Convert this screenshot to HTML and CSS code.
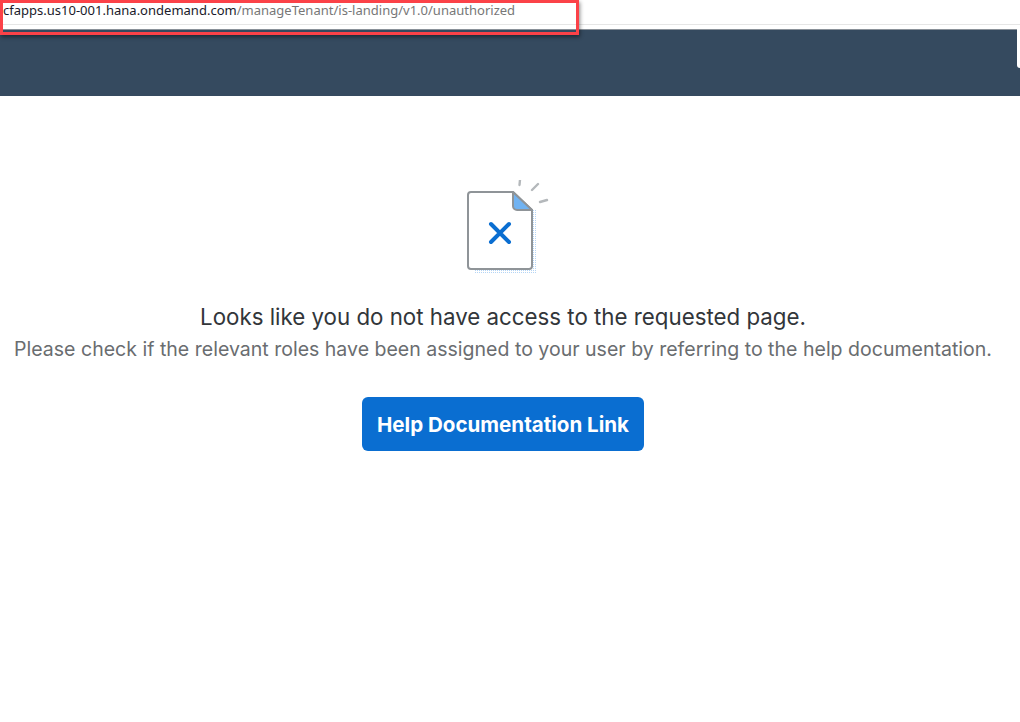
FILE: index.html
```html
<!DOCTYPE html>
<html lang="en">
<head>
  <meta charset="UTF-8" />
  <title>Unauthorized</title>
  <link rel="stylesheet" href="styles.css">
</head>
<body>
  <div class="address-bar">
    <span class="host">cfapps.us10-001.hana.ondemand.com</span><span class="path">/manageTenant/is-landing/v1.0/unauthorized</span>
  </div>
  <!-- red box drawn over the screenshot -->
  <div class="highlight"></div>

  <header class="shell-bar">
    <div class="shell-tab"></div>
  </header>

  <main class="message">
    <svg class="doc-icon" width="90" height="100" viewBox="0 0 90 100" aria-hidden="true">
      <defs>
        <pattern id="dots" width="2" height="2" patternUnits="userSpaceOnUse">
          <rect width="1" height="1" fill="#b5d5f5"></rect>
        </pattern>
      </defs>
      <path d="M73 30h5v64H15v-5h58z" fill="url(#dots)"></path>
      <path d="M54 12H12a3 3 0 0 0-3 3v71a3 3 0 0 0 3 3h58a3 3 0 0 0 3-3V30z" fill="#fff" stroke="#8f9498" stroke-width="2" stroke-linejoin="round"></path>
      <path d="M54 12v14a4 4 0 0 0 4 4h15z" fill="#71b3f2" stroke="#8f9498" stroke-width="2" stroke-linejoin="round"></path>
      <path d="M32 44l18 18m0-18L32 62" fill="none" stroke="#0a6ed1" stroke-width="4" stroke-linecap="round"></path>
      <path d="M61 0l-.500 5M79 4l-6 6M88 20l-7 2" fill="none" stroke="#b4b8bb" stroke-width="2.400" stroke-linecap="round"></path>
    </svg>
    <h1 class="title">Looks like you do not have access to the requested page.</h1>
    <p class="hint">Please check if the relevant roles have been assigned to your user by referring to the help documentation.</p>
    <a class="help-btn" href="#">Help Documentation Link</a>
  </main>
</body>
</html>
```

FILE: styles.css
```css
html, body {
  margin: 0;
  height: 100%;
  overflow: hidden;
}
body {
  background: #fff;
  font-family: Inter, Roboto, sans-serif;
  color: #32363a;
}
.address-bar {
  height: 25px;
  padding-left: 3px;
  box-sizing: border-box;
  font-family: "Noto Sans", sans-serif;
  font-size: 13.02px;
  line-height: 21px;
  white-space: nowrap;
  background: #fff;
  border-bottom: 1px solid #e6e6e6;
}
.host {
  color: #1a1a2a;
}
.path {
  color: #777;
}
.highlight {
  position: absolute;
  z-index: 1;
  top: 0;
  left: 0;
  width: 579px;
  height: 35px;
  box-sizing: border-box;
  border: 3px solid #fb4248;
  box-shadow: 1px 2px 4px rgba(0, 0, 0, 0.45);
}
.shell-bar {
  position: relative;
  height: 67px;
  margin-top: 4px;
  background: #354a5f;
  border-top: 1px solid #8a9199;
  box-sizing: border-box;
}
.shell-tab {
  position: absolute;
  top: -4px;
  right: 0;
  width: 3px;
  height: 42px;
  background: #fff;
  border-radius: 3px 0 0 3px;
}
.message {
  display: flex;
  flex-direction: column;
  align-items: center;
  width: 1006px;
  padding-top: 84px;
}
.doc-icon {
  display: block;
  margin-left: 2px;
}
.title {
  margin: 21px 0 0;
  font-size: 22.3px;
  font-weight: 400;
  line-height: 32px;
}
.hint {
  margin: 2px 0 0;
  font-size: 19.54px;
  line-height: 28px;
  color: #6a6d70;
  white-space: nowrap;
}
.help-btn {
  margin-top: 34px;
  width: 282px;
  height: 54px;
  box-sizing: border-box;
  display: flex;
  align-items: center;
  justify-content: center;
  padding-top: 1px;
  background: #0a6ed1;
  border-radius: 6px;
  color: #fff;
  font-size: 20.57px;
  font-weight: 700;
  text-decoration: none;
}
```
